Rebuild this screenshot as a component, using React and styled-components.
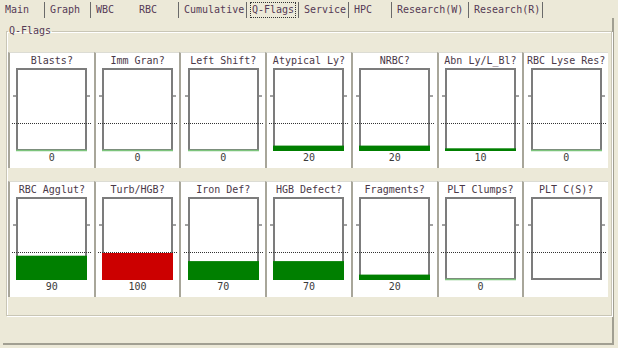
import styled, { createGlobalStyle } from 'styled-components'

const GlobalStyle = createGlobalStyle`
    body {
        margin: 0;
        background: #ece9d8;
        overflow: hidden;
        font-family: "DejaVu Sans Mono", "Liberation Mono", monospace;
    }
`

const tabs = [
    { label: 'Main', w: 45 },
    { label: 'Graph', w: 46 },
    { label: 'WBC', w: 43, noSep: true },
    { label: 'RBC', w: 45 },
    { label: 'Cumulative', w: 68 },
    { label: 'Q-Flags', w: 52, active: true },
    { label: 'Service', w: 50 },
    { label: 'HPC', w: 43 },
    { label: 'Research(W)', w: 77 },
    { label: 'Research(R)', w: 74 },
]

const flags = [
    { title: 'Blasts?', value: 0 },
    { title: 'Imm Gran?', value: 0 },
    { title: 'Left Shift?', value: 0 },
    { title: 'Atypical Ly?', value: 20 },
    { title: 'NRBC?', value: 20 },
    { title: 'Abn Ly/L_Bl?', value: 10 },
    { title: 'RBC Lyse Res?', value: 0 },
    { title: 'RBC Agglut?', value: 90 },
    { title: 'Turb/HGB?', value: 100 },
    { title: 'Iron Def?', value: 70 },
    { title: 'HGB Defect?', value: 70 },
    { title: 'Fragments?', value: 20 },
    { title: 'PLT Clumps?', value: 0 },
    { title: 'PLT C(S)?', value: null },
]

function FlagChart({ value }) {
    const h = value ? (value / 100) * 27 : 0
    const color = value >= 100 ? '#cc0000' : '#007f00'
    return (
        <svg width="79" height="84" viewBox="0 0 79 84">
            <rect x="5" y="1" width="69" height="81" fill="#fff" stroke="#7c7c7c" strokeWidth="2" />
            <line x1="1" y1="28" x2="4" y2="28" stroke="#444" strokeWidth="1" />
            <line x1="75" y1="28" x2="78" y2="28" stroke="#444" strokeWidth="1" />
            <line x1="0" y1="55.5" x2="79" y2="55.5" stroke="#333" strokeWidth="1" strokeDasharray="1 1" />
            {value === 0 && <line x1="4" y1="82.5" x2="75" y2="82.5" stroke="#7cc47c" strokeWidth="1.5" />}
            {value > 0 && <rect x="4" y={83 - h} width="71" height={h} fill={color} />}
        </svg>
    )
}

export default function App() {
    return (
        <>
            <GlobalStyle />
            <TabBar>
                {tabs.map((t) => (
                    <Tab key={t.label} $w={t.w} $noSep={t.noSep}>
                        <TabLabel $active={t.active}>{t.label}</TabLabel>
                    </Tab>
                ))}
            </TabBar>
            <Panel>
                <GroupBox>
                    <Legend>Q-Flags</Legend>
                    <FlagGrid>
                        {flags.map((f) => (
                            <FlagCell key={f.title}>
                                <FlagTitle>{f.title}</FlagTitle>
                                <FlagChart value={f.value} />
                                <FlagValue>{f.value === null ? '' : f.value}</FlagValue>
                            </FlagCell>
                        ))}
                    </FlagGrid>
                </GroupBox>
            </Panel>
        </>
    )
}

const TabBar = styled.div`
    display: flex;
    height: 18px;
    align-items: flex-start;
`
const Tab = styled.div`
    width: ${(p) => p.$w}px;
    box-sizing: border-box;
    height: 16px;
    margin-top: 2px;
    padding-left: 3px;
    border-right: 1px solid ${(p) => (p.$noSep ? 'transparent' : '#6a6a6a')};
    display: flex;
    align-items: stretch;
    white-space: nowrap;
`
const TabLabel = styled.span`
    font-size: 10px;
    line-height: 14px;
    color: #553a55;
    padding: 0 1px;
    border: 1px dotted ${(p) => (p.$active ? '#333' : 'transparent')};
`
const Panel = styled.div`
    margin-left: 3px;
    width: 611px;
    height: 327px;
    box-sizing: border-box;
    border-right: 2px solid #a19f92;
    border-bottom: 2px solid #a19f92;
    padding-top: 7px;
`
const GroupBox = styled.fieldset`
    margin: 0 0 0 3px;
    width: 606px;
    height: 291px;
    box-sizing: border-box;
    padding: 0 0 0 1px;
    border: 1px solid #c9c6b6;
    box-shadow: inset 1px 1px 0 #fff, 1px 1px 0 #fff;
`
const Legend = styled.legend`
    padding: 0 1px;
    margin-left: 0;
    font-size: 10px;
    line-height: 12px;
    color: #553a55;
`
const FlagGrid = styled.div`
    margin-top: 15px;
    width: 600px;
    display: grid;
    grid-template-columns: repeat(7, 1fr);
    row-gap: 13px;
`
const FlagCell = styled.div`
    height: 116px;
    box-sizing: border-box;
    background: #fff;
    border-left: 2px solid #a8a69a;
    border-top: 1px solid #dcdcd4;
    padding-top: 1px;
    display: flex;
    flex-direction: column;
    align-items: center;
`
const FlagTitle = styled.div`
    font-size: 10px;
    line-height: 14px;
    color: #4a3848;
    white-space: nowrap;
`
const FlagValue = styled.div`
    font-size: 10px;
    line-height: 12px;
    height: 12px;
    color: #3a3a3a;
`
